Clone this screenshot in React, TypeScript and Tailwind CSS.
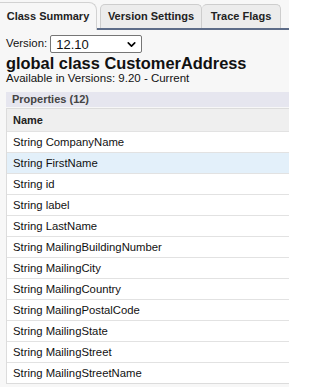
import { ChevronDown } from "lucide-react";

const properties = [
  "String CompanyName",
  "String FirstName",
  "String id",
  "String label",
  "String LastName",
  "String MailingBuildingNumber",
  "String MailingCity",
  "String MailingCountry",
  "String MailingPostalCode",
  "String MailingState",
  "String MailingStreet",
  "String MailingStreetName",
];

export default function App() {
  return (
    <div className="w-[289px] h-[387px] overflow-hidden bg-[#f7f7f7] text-[#111] font-['Liberation_Sans',Arial,sans-serif]">
      {/* tabs */}
      <div className="flex items-end pt-[2px]">
        <div className="w-[97px] h-[28px] flex items-center justify-center border-t border-r border-[#d2d2d2] rounded-tr-[8px] bg-[#f7f7f7] text-[11px] font-bold text-[#222]">
          Class Summary
        </div>
        <div className="flex-1 flex items-end border-b-2 border-[#5d6c88] pl-[3px]">
          <div className="w-[102px] h-[24px] flex items-center justify-center bg-[#ececec] border border-b-0 border-[#cdcdcd] rounded-t-[5px] text-[11px] font-bold text-[#222]">
            Version Settings
          </div>
          <div className="w-[79px] h-[24px] flex items-center justify-center bg-[#ececec] border border-b-0 border-l-0 border-[#cdcdcd] rounded-t-[5px] text-[11px] font-bold text-[#222]">
            Trace Flags
          </div>
        </div>
      </div>

      <div className="pl-[6px]">
        <div className="flex items-center gap-[3px] mt-[5px]">
          <span className="text-[11.4px]">Version:</span>
          <div className="w-[92px] h-[18px] flex items-center justify-between bg-white border border-[#767676] rounded-[2px] pl-[5px] pr-[3px]">
            <span className="text-[13px] leading-none">12.10</span>
            <ChevronDown className="w-[13px] h-[13px] text-black" strokeWidth={3} />
          </div>
        </div>
        <div className="text-[16.4px] font-bold leading-[18px] mt-[1px]">global class CustomerAddress</div>
        <div className="text-[11.5px] leading-[13px]">Available in Versions: 9.20 - Current</div>

        <div className="mt-[7px] h-[15px] flex items-center bg-[#e6e6ef] pl-[6px] text-[11px] font-bold text-[#444]">
          Properties (12)
        </div>
        <div className="mt-[1px] border-l border-b border-[#dcdcdc] bg-white">
          <div className="h-[23px] flex items-center bg-[#efefef] border-t border-[#dcdcdc] pl-[6px] text-[11px] font-bold text-[#222]">
            Name
          </div>
          {properties.map((p, i) => (
            <div
              key={p}
              className={
                "h-[21px] flex items-center border-t border-[#e2e2e2] pl-[6px] text-[11.3px] " +
                (i === 1 ? "bg-[#e3f0fa]" : "bg-white")
              }
            >
              {p}
            </div>
          ))}
        </div>
      </div>
    </div>
  );
}
